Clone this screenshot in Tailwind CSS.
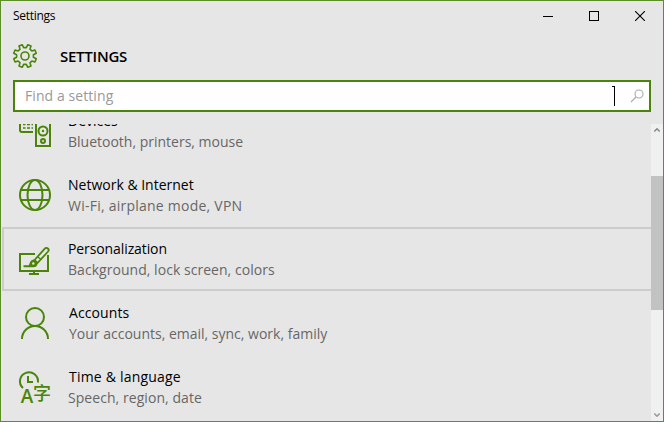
<!DOCTYPE html>
<html lang="en">
<head>
<meta charset="utf-8">
<title>Settings</title>
<script src="https://cdn.jsdelivr.net/npm/@tailwindcss/browser@4"></script>
</head>
<body class="font-['Open_Sans','Noto_Sans',sans-serif]">
<div class="flex h-[422px] w-[664px] flex-col overflow-hidden border border-[#5c8f25] bg-[#e6e6e6] text-black">
  <header class="flex h-[30px] shrink-0 items-center justify-between pl-3 pr-[18px]">
    <span class="text-[12px] leading-[30px] tracking-[-0.3px]">Settings</span>
    <div class="flex items-center gap-9">
      <svg class="size-[10px]" viewBox="0 0 10 10" shape-rendering="crispEdges"><path d="M0 5h10v1H0z"/></svg>
      <svg class="size-[10px]" viewBox="0 0 10 10" fill="none" stroke="#000" shape-rendering="crispEdges"><path d="M.5 .5h9v9h-9z"/></svg>
      <svg class="size-[10px]" viewBox="0 0 10 10" fill="none" stroke="#000" stroke-width="1.1"><path d="M0 0l10 10M10 0L0 10"/></svg>
    </div>
  </header>
  <div class="flex h-[49px] shrink-0 items-center pl-3 pt-px">
    <svg class="size-6" viewBox="-12 -12 24 24" fill="none" stroke="#4a8509" stroke-width="1.6">
      <circle r="4"/>
      <path stroke-linejoin="round" d="M8.4 1.33L11.26 2.81L9.94 5.97L6.88 5L5 6.88L5.97 9.94L2.81 11.26L1.33 8.4L-1.33 8.4L-2.81 11.26L-5.97 9.94L-5 6.88L-6.88 5L-9.94 5.97L-11.26 2.81L-8.4 1.33L-8.4 -1.33L-11.26 -2.81L-9.94 -5.97L-6.88 -5L-5 -6.88L-5.97 -9.94L-2.81 -11.26L-1.33 -8.4L1.33 -8.4L2.81 -11.26L5.97 -9.94L5 -6.88L6.88 -5L9.94 -5.97L11.26 -2.81L8.4 -1.33z"/>
    </svg>
    <h1 class="ml-[23px] text-[15px] font-semibold leading-[22px] tracking-[-0.25px]">SETTINGS</h1>
  </div>
  <div class="ml-3 flex h-8 w-[638px] shrink-0 items-center border-2 border-[#4a8509] bg-white pl-[10px] pr-[5px]">
    <span class="text-[14px] leading-7 tracking-[0.08px] text-[#999]">Find a setting</span>
    <svg class="ml-auto mr-[15px] h-5 w-[3px]" viewBox="0 0 3 20" shape-rendering="crispEdges"><path d="M0 0h3v20H2V1H0z"/></svg>
    <svg class="size-[14px]" viewBox="0 0 14 14" fill="none" stroke="#aaa" stroke-width="1.1"><circle cx="9" cy="5" r="4"/><path d="M6 8L1 13"/></svg>
  </div>
  <main class="mt-3 flex min-h-0 flex-1">
    <div class="min-w-0 flex-1 overflow-hidden">
      <ul class="-mt-[25px] text-[14px] leading-[21px]">
        <li class="flex h-16 pl-[18px]">
          <svg class="mt-4 size-8 shrink-0" viewBox="0 0 32 32" fill="none" stroke="#4a8509" stroke-width="2"><path d="M14 17H3q-2 0-2-2V1h22v4"/><path stroke-width="1.6" d="M4 13h2.5M8 13h3M12.5 13h1.5M4 9.5h2.5M8 9.5h3M12.5 9.5h1.5"/><path d="M17 5h14v26H17z"/><circle cx="24" cy="16" r="4.5"/><circle cx="24" cy="26" r="2"/><circle cx="24" cy="16" r="1.2" fill="#4a8509" stroke="none"/></svg>
          <div class="ml-[17px] mt-[11px]"><p>Devices</p><p class="text-[#666]">Bluetooth, printers, mouse</p></div>
        </li>
        <li class="flex h-16 pl-[18px]">
          <svg class="mt-4 size-8 shrink-0" viewBox="0 0 32 32" fill="none" stroke="#4a8509" stroke-width="2"><circle cx="16" cy="16" r="15"/><ellipse cx="16" cy="16" rx="7.5" ry="15"/><path d="M2 11h28M2 21h28"/></svg>
          <div class="ml-[17px] mt-[11px]"><p>Network &amp; Internet</p><p class="tracking-[0.24px] text-[#666]">Wi-Fi, airplane mode, VPN</p></div>
        </li>
        <li class="ml-px flex h-16 border-2 border-r-0 border-[#ccc] pl-[15px]">
          <svg class="mt-[14px] size-8 shrink-0" viewBox="0 0 32 32" fill="none" stroke="#4a8509" stroke-width="2">
            <path d="M16 11H1v17h28V12M15 28v3M10 31h10"/>
            <path stroke-width="1.8" d="M15.5 17L25.8 5.7a2.1 2.1 0 0 1 3.3 2.8L18.5 20z"/>
            <path stroke-width="1.4" d="M18.5 13.5l3.5 3"/>
            <path fill="#4a8509" stroke="none" d="M14.5 16.5l4 3.8c0 3-2 4-4 4H4.5v-2h5c1.200 0 1-5.300 5-5.800z"/>
            <circle cx="14.300" cy="20.500" r="1.200" fill="#e6e6e6" stroke="none"/>
          </svg>
          <div class="ml-[17px] mt-[9px]"><p class="tracking-[-0.1px]">Personalization</p><p class="tracking-[0.04px] text-[#666]">Background, lock screen, colors</p></div>
        </li>
        <li class="flex h-16 pl-[18px]">
          <svg class="mt-4 size-8 shrink-0" viewBox="0 0 32 32" fill="none" stroke="#4a8509" stroke-width="2"><circle cx="16" cy="10" r="9"/><path d="M3 32a13 13 0 0 1 26 0"/></svg>
          <div class="ml-[18px] mt-[11px]"><p class="tracking-[0.1px]">Accounts</p><p class="text-[#666]">Your accounts, email, sync, work, family</p></div>
        </li>
        <li class="flex h-16 pl-[18px]">
          <svg class="mt-4 size-8 shrink-0 overflow-visible" viewBox="0 0 32 32">
            <path fill="none" stroke="#4a8509" stroke-width="2" d="M4 17A9 9 0 1 1 18.900 11.500M9 5v6h5"/>
            <text x="1.800" y="31.500" textLength="12.500" lengthAdjust="spacingAndGlyphs" class="fill-[#4a8509] font-['Open_Sans'] text-[19px] font-semibold">A</text>
            <text x="14" y="29" class="fill-[#4a8509] font-['Noto_Sans_CJK_SC',sans-serif] text-[18px] font-medium">字</text>
          </svg>
          <div class="ml-[17px] mt-[11px]"><p class="pl-px tracking-[0.2px]">Time &amp; language</p><p class="tracking-[0.06px] text-[#666]">Speech, region, date</p></div>
        </li>
      </ul>
    </div>
    <div class="flex w-3 shrink-0 flex-col bg-[#f0f0f0]">
      <div class="flex h-[52px] justify-center pt-1"><svg class="h-1 w-[6px]" viewBox="0 0 6 4" fill="none" stroke="#888" stroke-width="1.5"><path d="M.3 3.500L3 .8l2.700 2.700"/></svg></div>
      <div class="h-[134px] bg-[#c2c2c2]"></div>
      <div class="flex flex-1 items-end justify-center pb-1"><svg class="h-1 w-[6px]" viewBox="0 0 6 4" fill="none" stroke="#999" stroke-width="1.5"><path d="M.3 .5L3 3.200l2.700-2.700"/></svg></div>
    </div>
  </main>
</div>
</body>
</html>
